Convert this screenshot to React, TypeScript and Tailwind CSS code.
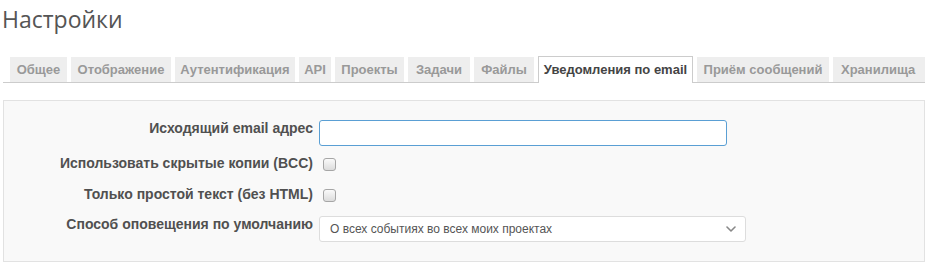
import React from "react";

type TTab = {
  label: string;
  width: string;
  active?: boolean;
};

const tabs: TTab[] = [
  { label: "Общее", width: "w-[57px]" },
  { label: "Отображение", width: "w-[100px]" },
  { label: "Аутентификация", width: "w-[120px]" },
  { label: "API", width: "w-[32px]" },
  { label: "Проекты", width: "w-[69px]" },
  { label: "Задачи", width: "w-[62px]" },
  { label: "Файлы", width: "w-[60px]" },
  { label: "Уведомления по email", width: "w-[155px]", active: true },
  { label: "Приём сообщений", width: "w-[132px]" },
];

const Checkbox = () => (
  <input
    type="checkbox"
    className="appearance-none w-[13px] h-[13px] rounded-[3px] border border-[#a6a6a6] bg-gradient-to-b from-[#fafafa] to-[#dcdcdc] m-0"
  />
);

const App: React.FC = () => {
  return (
    <div className="w-[925px] h-[262px] bg-white overflow-hidden font-['Liberation_Sans',Arial,sans-serif]">
      {/* Header */}
      <h2 className="pl-[2px] pt-[3px] h-[57px] text-[23px] leading-[32px] text-[#555] font-['Open_Sans',sans-serif] font-normal">
        Настройки
      </h2>

      {/* Tabs */}
      <div className="ml-[3px] border-b border-[#ccc] h-[26px] pl-[7px] flex gap-[4px] whitespace-nowrap">
        {tabs.map((tab) =>
          tab.active ? (
            <div
              key={tab.label}
              className={`${tab.width} shrink-0 h-[27px] -mt-[1px] flex items-center justify-center bg-white border border-b-0 border-[#ccc] text-[13px] font-bold text-[#444]`}
            >
              {tab.label}
            </div>
          ) : (
            <div
              key={tab.label}
              className={`${tab.width} shrink-0 h-[25px] flex items-center justify-center bg-[#eee] text-[13px] font-bold text-[#999]`}
            >
              {tab.label}
            </div>
          )
        )}
        <div className="w-[92px] shrink-0 h-[25px] flex items-center pl-[8px] bg-[#eee] text-[13px] font-bold text-[#999]">
          Хранилища
        </div>
      </div>

      {/* Settings box */}
      <div className="ml-[3px] mt-[17px] h-[162px] bg-[#f9f9f9] border border-[#e2e2e2] pt-[19px] text-[14px] leading-[17px] font-bold text-[#505050]">
        <div className="flex items-start gap-[6px]">
          <label className="w-[309px] text-right">Исходящий email адрес</label>
          <input
            type="text"
            className="w-[408px] h-[26px] bg-white border border-[#5a9fd4] rounded-[3px] outline-none"
          />
        </div>

        <div className="flex items-start gap-[6px] mt-[9px]">
          <label className="w-[309px] text-right">
            Использовать скрытые копии (BCC)
          </label>
          <div className="pt-[3px] pl-[4px] flex">
            <Checkbox />
          </div>
        </div>

        <div className="flex items-start gap-[6px] mt-[14px]">
          <label className="w-[309px] text-right">
            Только простой текст (без HTML)
          </label>
          <div className="pt-[3px] pl-[4px] flex">
            <Checkbox />
          </div>
        </div>

        <div className="flex items-start gap-[6px] mt-[13px]">
          <label className="w-[309px] text-right">
            Способ оповещения по умолчанию
          </label>
          <div className="w-[427px] h-[26px] bg-white border border-[#ddd] rounded-[3px] flex items-center justify-between pl-[10px] pr-[9px] text-[12px] font-normal text-[#555]">
            <span>О всех событиях во всех моих проектах</span>
            <svg width="10" height="6" viewBox="0 0 10 6" fill="none">
              <path
                d="M1 1l4 4 4-4"
                stroke="#888"
                strokeWidth="1.6"
                strokeLinecap="round"
                strokeLinejoin="round"
              />
            </svg>
          </div>
        </div>
      </div>
    </div>
  );
};

export default App;
